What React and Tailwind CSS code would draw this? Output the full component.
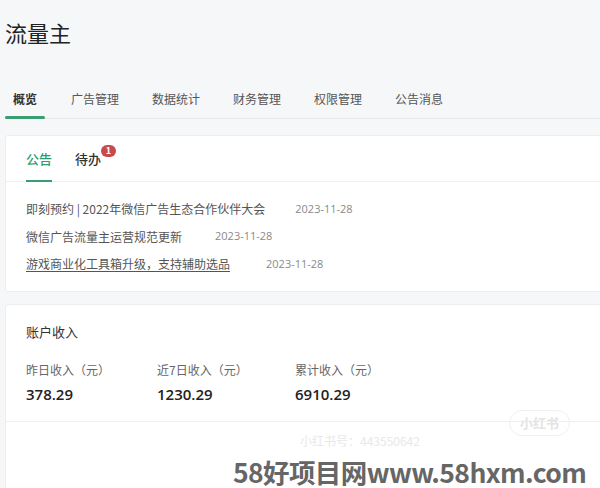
export default function App() {
  const font = { fontFamily: '"Noto Sans CJK SC", "Noto Sans", sans-serif' };
  const tabs = ["概览", "广告管理", "数据统计", "财务管理", "权限管理", "公告消息"];
  const notices = [
    { t: "即刻预约 | 2022年微信广告生态合作伙伴大会", u: false, g: "ml-[30px]" },
    { t: "微信广告流量主运营规范更新", u: false, g: "ml-[33px]" },
    { t: "游戏商业化工具箱升级，支持辅助选品", u: true, g: "ml-[36px]" },
  ];
  const stats = [
    { l: "昨日收入（元）", v: "378.29", w: "w-[131px]" },
    { l: "近7日收入（元）", v: "1230.29", w: "w-[138px]" },
    { l: "累计收入（元）", v: "6910.29", w: "w-[138px]" },
  ];
  return (
    <div className="relative w-[600px] h-[488px] overflow-hidden bg-[#f6f7f8] text-[#333]" style={font}>
      <div className="pl-[5px] pt-[18px] h-[72px] text-[22px] leading-[28px] text-[#222]">流量主</div>
      <div className="flex items-end h-[47px] border-b border-[#e6e8ea] ml-[5px]">
        {tabs.map((t, i) => (
          <div
            key={t}
            className={
              "relative h-full flex items-center pt-[8px] text-[12px] " +
              (i === 0 ? "w-[40px] justify-center font-bold text-[#333] mr-[26px]" : "mr-[33px] text-[#555]")
            }
          >
            {t}
            {i === 0 && <div className="absolute left-0 right-0 bottom-[-1px] h-[3px] bg-[#3a9e73] rounded-sm" />}
          </div>
        ))}
      </div>
      <div className="ml-[5px] mt-[16px] w-[600px] h-[157px] bg-white border border-[#eceef0] rounded-[3px]">
        <div className="flex items-end h-[46px] border-b border-[#eef0f2] pl-[20px]">
          <div className="relative h-full flex items-center text-[13px] text-[#2f9d6e] font-medium mr-[23px]">
            公告
            <div className="absolute left-0 right-0 bottom-[-1px] h-[2px] bg-[#3a9e73]" />
          </div>
          <div className="relative h-full flex items-center text-[13px] text-[#333] font-medium">
            待办
            <span className="absolute left-[26px] top-[9px] w-[15px] h-[12px] rounded-full bg-[#c84a4a] text-white text-[9px] leading-[12px] text-center font-bold">
              1
            </span>
          </div>
        </div>
        <div className="pl-[20px] pt-[18px] flex flex-col gap-[9.5px]">
          {notices.map((n) => (
            <div key={n.t} className="flex items-center h-[18px]">
              <span className={"text-[12px] text-[#555] " + (n.u ? "underline underline-offset-2" : "")}>{n.t}</span>
              <span className={n.g + " text-[11px] text-[#8a8a8a]"} style={{ fontFamily: '"Open Sans", sans-serif' }}>
                2023-11-28
              </span>
            </div>
          ))}
        </div>
      </div>
      <div className="ml-[5px] mt-[12px] w-[600px] h-[200px] bg-white border border-[#eceef0] rounded-[3px]">
        <div className="h-[117px] border-b border-[#eef0f2] pl-[20px]">
          <div className="pt-[18px] text-[13px] text-[#333] leading-[18px]">账户收入</div>
          <div className="flex mt-[21px]">
            {stats.map((s) => (
              <div key={s.l} className={s.w}>
                <div className="text-[12px] text-[#666] leading-[16px]">{s.l}</div>
                <div
                  className="mt-[6px] text-[15px] font-semibold text-[#222] leading-[20px]"
                  style={{ fontFamily: '"Open Sans", sans-serif' }}
                >
                  {s.v}
                </div>
              </div>
            ))}
          </div>
        </div>
      </div>
      <div className="absolute right-[30px] top-[410px] px-[10px] h-[26px] rounded-full border border-[#f0f0f0] text-[13px] leading-[24px] text-[#e4e4e4] font-bold">
        小红书
      </div>
      <div className="absolute left-[300px] top-[432px] text-[12px] text-[#e8e8e8]">小红书号：443550642</div>
      <div
        className="absolute left-[233px] top-[457px] text-[26.5px] font-bold leading-[30px] text-[#666] whitespace-nowrap tracking-[-0.6px]"
        style={{ fontFamily: '"Noto Sans CJK SC", "Liberation Sans", sans-serif' }}
      >
        58好项目网www.58hxm.com
      </div>
    </div>
  );
}
